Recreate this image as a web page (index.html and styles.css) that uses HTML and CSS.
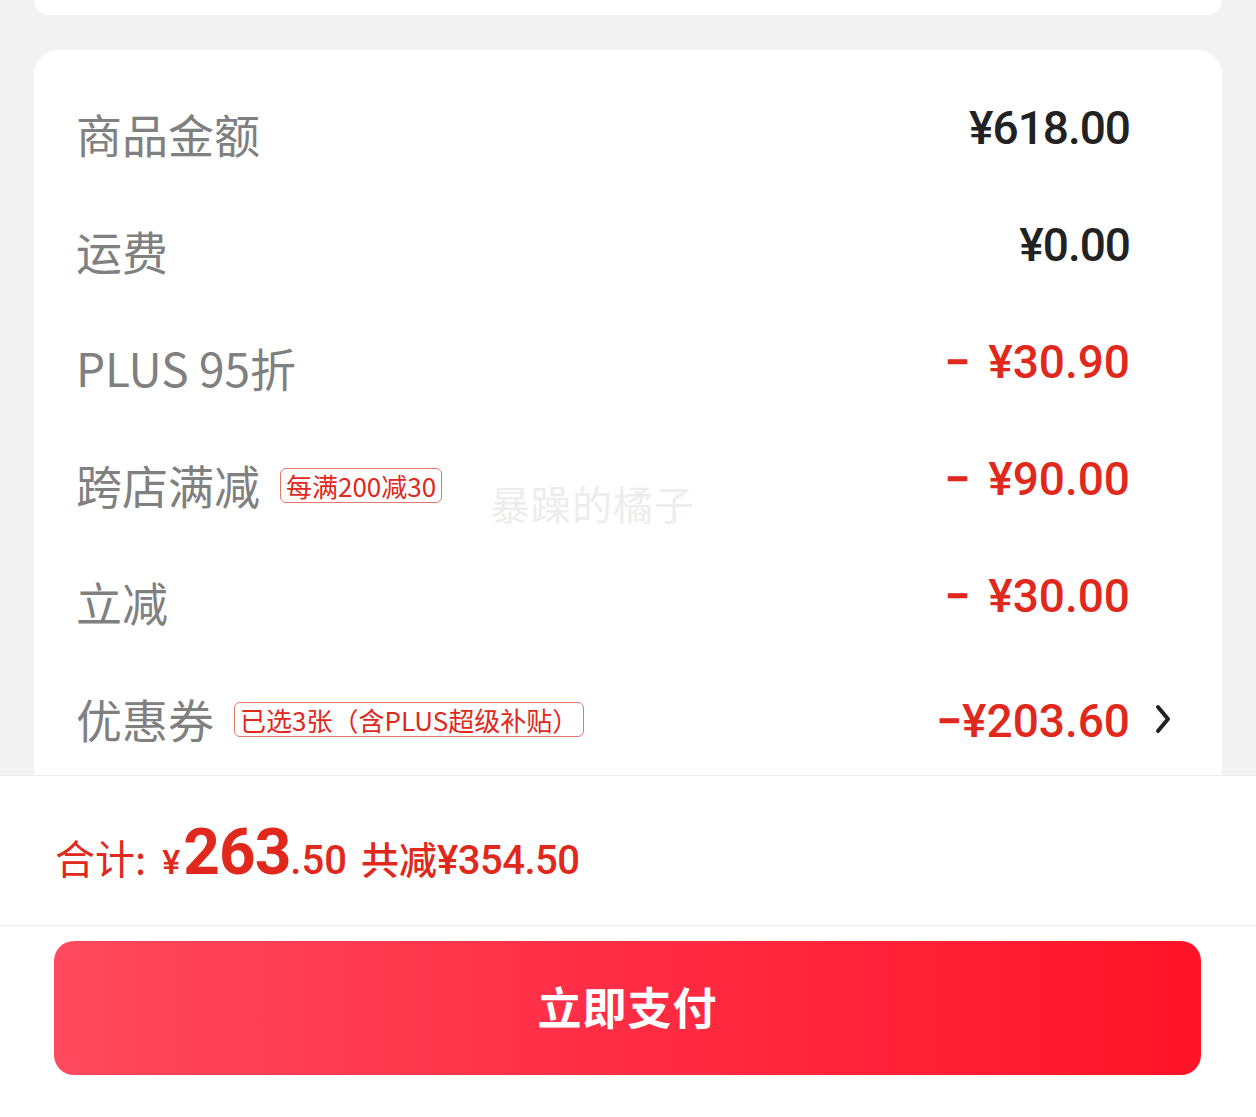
FILE: index.html
```html
<!DOCTYPE html>
<html lang="zh-CN">
<head>
<meta charset="utf-8">
<title>订单结算</title>
<link rel="stylesheet" href="styles.css">
</head>
<body>
<div class="page">
  <main class="scroll">
    <div class="top-card"></div>
    <section class="summary-card">
      <div class="row">
        <div class="label">商品金额</div>
        <div class="value">¥618.00</div>
      </div>
      <div class="row">
        <div class="label">运费</div>
        <div class="value">¥0.00</div>
      </div>
      <div class="row">
        <div class="label">PLUS 95折</div>
        <div class="value red"><span class="minus gap">−</span>¥30.90</div>
      </div>
      <div class="row">
        <div class="label">跨店满减<span class="tag">每满200减30</span></div>
        <div class="value red"><span class="minus gap">−</span>¥90.00</div>
      </div>
      <div class="row">
        <div class="label">立减</div>
        <div class="value red"><span class="minus gap">−</span>¥30.00</div>
      </div>
      <div class="row">
        <div class="label">优惠券<span class="tag">已选3张（含PLUS超级补贴）</span></div>
        <div class="value-wrap">
          <div class="value red"><span class="minus">−</span>¥203.60</div>
          <svg class="chevron" width="18" height="32" viewBox="0 0 18 32"><polyline points="4,4 14,16 4,28" fill="none" stroke="#222" stroke-width="4" stroke-linecap="round" stroke-linejoin="round"/></svg>
        </div>
      </div>
      <div class="watermark">暴躁的橘子</div>
    </section>
  </main>
  <footer class="bottom">
    <div class="total">
      <span class="t-label">合计:</span>
      <span class="t-yen">¥</span><span class="t-int">263</span><span class="t-dec">.50</span>
      <span class="t-save">共减<span class="t-save-num">¥354.50</span></span>
    </div>
    <div class="pay-wrap">
      <button class="pay">立即支付</button>
    </div>
  </footer>
</div>
</body>
</html>
```

FILE: styles.css
```css
* { box-sizing: border-box; }
html, body {
  margin: 0;
  padding: 0;
  background: #f2f2f2;
  font-family: "Noto Sans CJK SC", "Noto Sans", sans-serif;
}
.page {
  width: 1256px;
  height: 1117px;
  overflow: hidden;
  display: flex;
  flex-direction: column;
}
.scroll {
  height: 775px;
  overflow: hidden;
  padding: 0 34px;
  flex: none;
}
.top-card {
  height: 15px;
  background: #fff;
  border-radius: 0 0 22px 22px;
}
.summary-card {
  position: relative;
  margin-top: 35px;
  background: #fff;
  border-radius: 24px;
  padding: 27px 92px 60px 42px;
}
.row {
  height: 117px;
  display: flex;
  align-items: center;
  justify-content: space-between;
}
.label {
  display: flex;
  align-items: center;
  font-size: 46px;
  color: #808080;
  line-height: 1;
  margin-top: -6px;
}
.tag {
  margin-left: 20px;
  font-size: 26px;
  line-height: 33px;
  height: 35px;
  color: #e1281c;
  border: 1px solid #e3776c;
  border-radius: 6px;
  padding: 0 5px;
  margin-top: 4px;
}
.value {
  font-family: Roboto, "Noto Sans", sans-serif;
  font-weight: 500;
  font-size: 46px;
  letter-spacing: -1px;
  color: #222;
  line-height: 1;
  margin-bottom: 16px;
}
.value.red { color: #e1281c; letter-spacing: 0; }
.minus {
  font-weight: 700;
}
.minus.gap {
  margin-right: 18px;
}
.value-wrap {
  position: relative;
  display: flex;
  align-items: center;
}
.value-wrap .value { margin-bottom: 0; }
.chevron {
  position: absolute;
  left: calc(100% + 24px);
  top: 5px;
}
.watermark {
  position: absolute;
  left: 456px;
  top: 429px;
  font-size: 40px;
  line-height: 1.2;
  color: #ededed;
  letter-spacing: 1px;
  pointer-events: none;
}
.bottom {
  flex: 1;
  background: #fff;
  border-top: 1px solid #eeeeee;
}
.total {
  height: 150px;
  display: flex;
  align-items: baseline;
  padding: 42px 0 0 55px;
  color: #e1281c;
  border-bottom: 1px solid #f1f1f1;
  line-height: 1.1;
}
.t-label {
  font-size: 40px;
  margin-right: 16px;
}
.t-yen {
  font-family: Roboto, sans-serif;
  font-size: 34px;
  font-weight: 500;
  margin-right: 3px;
}
.t-int {
  font-family: Roboto, sans-serif;
  font-size: 64px;
  font-weight: 700;
  letter-spacing: -1px;
}
.t-dec {
  font-family: Roboto, sans-serif;
  font-size: 40px;
  font-weight: 500;
  margin-right: 14px;
}
.t-save {
  font-size: 38px;
  font-weight: 500;
}
.t-save-num {
  font-family: Roboto, sans-serif;
  font-size: 40px;
  font-weight: 500;
  letter-spacing: -0.5px;
}
.pay-wrap {
  padding: 15px 55px 0 54px;
}
.pay {
  width: 100%;
  height: 134px;
  border: none;
  border-radius: 20px;
  background: linear-gradient(90deg, #ff4a5d 0%, #ff2f47 45%, #ff1428 100%);
  color: #fff;
  font-family: "Noto Sans CJK SC", sans-serif;
  font-size: 44px;
  font-weight: 700;
  letter-spacing: 1px;
  line-height: 1;
  padding-bottom: 6px;
}
```
